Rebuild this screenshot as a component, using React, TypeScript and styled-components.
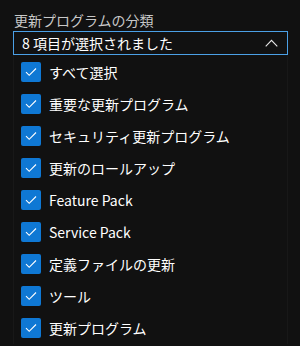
import React from 'react'
import styled, { createGlobalStyle } from 'styled-components'

const Global = createGlobalStyle`
  html, body {
    margin: 0;
    padding: 0;
    background: #111111;
    font-family: 'Noto Sans CJK JP', 'Noto Sans', sans-serif;
  }
`

const Page = styled.div`
  width: 300px;
  height: 346px;
  overflow: hidden;
  padding: 10px 12px 0 13px;
  box-sizing: border-box;
`

const Label = styled.div`
  color: #c8c8c8;
  font-size: 14px;
  line-height: 20px;
  margin-left: 1px;
`

const SelectBox = styled.div`
  height: 24px;
  border: 1px solid #4ba0e6;
  box-sizing: border-box;
  display: flex;
  align-items: center;
  justify-content: space-between;
  padding: 0 9px 0 8px;
  color: #ffffff;
  font-size: 14px;
  margin-top: 1px;
`

const List = styled.div`
  display: flex;
  flex-direction: column;
  padding: 1px 0 0 7px;
  background: #111111;
  border-left: 1px solid #181818;
  border-right: 1px solid #181818;
`

const Row = styled.label`
  display: flex;
  align-items: center;
  gap: 8px;
  height: 32px;
  color: #ffffff;
  font-size: 14px;
`

const Box = styled.span`
  width: 20px;
  height: 20px;
  border-radius: 2px;
  background: #0f78d4;
  display: flex;
  align-items: center;
  justify-content: center;
`

const items = [
  'すべて選択',
  '重要な更新プログラム',
  'セキュリティ更新プログラム',
  '更新のロールアップ',
  'Feature Pack',
  'Service Pack',
  '定義ファイルの更新',
  'ツール',
  '更新プログラム',
]

const Check = () => (
  <svg width='12' height='10' viewBox='0 0 12 10'>
    <path d='M1 5.2 L4.2 8.3 L11 1.5' fill='none' stroke='#ffffff' strokeWidth='1.1' />
  </svg>
)

const Chevron = () => (
  <svg width='13' height='8' viewBox='0 0 13 8'>
    <path d='M0.7 7.3 L6.5 1.3 L12.3 7.3' fill='none' stroke='#e8e8e8' strokeWidth='1.1' />
  </svg>
)

const App = () => (
  <Page>
    <Global />
    <Label>更新プログラムの分類</Label>
    <SelectBox>
      <span>8 項目が選択されました</span>
      <Chevron />
    </SelectBox>
    <List>
      {items.map((t) => (
        <Row key={t}>
          <Box>
            <Check />
          </Box>
          {t}
        </Row>
      ))}
    </List>
  </Page>
)

export default App
